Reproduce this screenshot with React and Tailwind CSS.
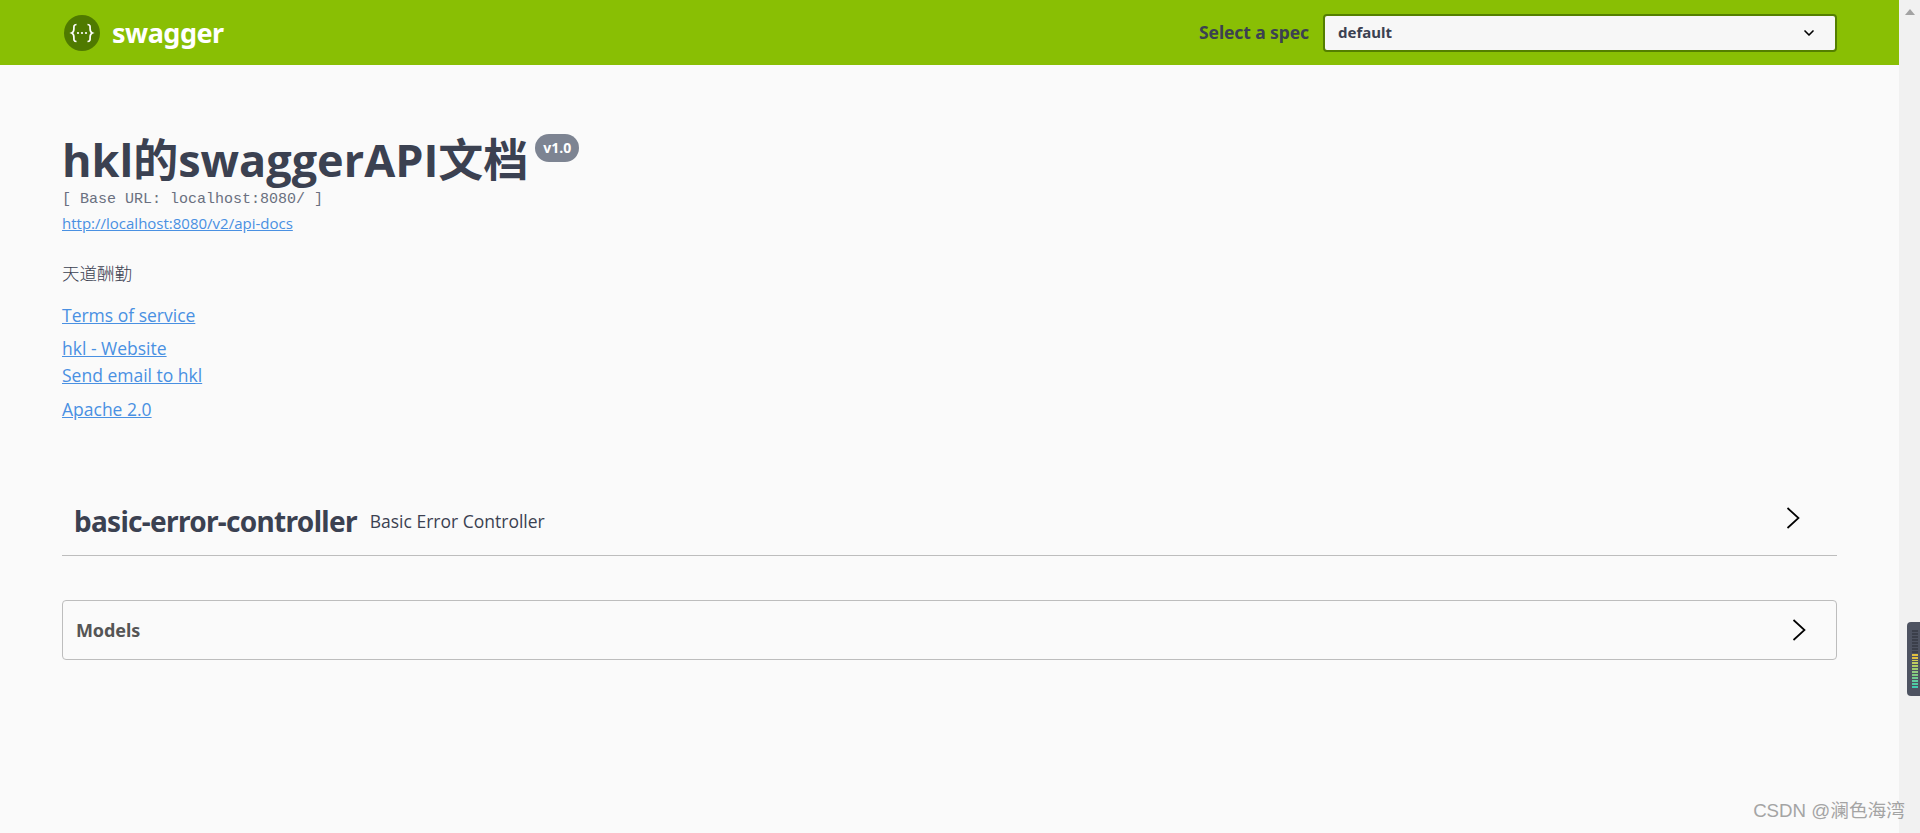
import { ChevronDown } from 'lucide-react';

const sans = 'font-["Open_Sans","Noto_Sans_CJK_SC",sans-serif]';
const head = 'font-["Noto_Sans","Noto_Sans_CJK_SC",sans-serif]';

function Logo() {
  return (
    <svg width="36" height="36" viewBox="0 0 36 36" className="shrink-0">
      <circle cx="18" cy="18" r="18" fill="#4f7a00" />
      <path
        d="M12.5 9.5c-3 0-2.6 2.2-2.6 4.2 0 2-.4 3.6-2.2 4.3 1.8.7 2.2 2.300 2.200 4.300 0 2-.4 4.200 2.600 4.200M23.500 9.500c3 0 2.600 2.200 2.600 4.200 0 2 .4 3.600 2.200 4.300-1.800.7-2.200 2.300-2.200 4.300 0 2 .4 4.200-2.600 4.200"
        fill="none"
        stroke="#fff"
        strokeWidth="1.700"
      />
      <circle cx="14" cy="18" r="1.100" fill="#fff" />
      <circle cx="18" cy="18" r="1.100" fill="#fff" />
      <circle cx="22" cy="18" r="1.100" fill="#fff" />
    </svg>
  );
}

function Chevron({ className = '' }) {
  return (
    <svg width="14" height="24" viewBox="0 0 14 24" className={`shrink-0 ${className}`}>
      <path d="M1.500 2l11 10-11 10" fill="none" stroke="#000" strokeWidth="1.700" />
    </svg>
  );
}

function TextLink({ children, className = '' }) {
  return (
    <a href="#" className={`block w-fit text-[#4990e2] underline ${className}`}>
      {children}
    </a>
  );
}

export default function App() {
  return (
    <div className={`relative flex h-[833px] overflow-hidden bg-[#fafafa] ${sans}`}>
      <main className="min-w-0 flex-1">
        <header className="flex h-[65px] items-center justify-between bg-[#89bf04] px-[62px]">
          <div className="flex items-center gap-[12px] pl-[2px]">
            <Logo />
            <span className={`text-[27px] leading-none font-bold tracking-[-0.5px] text-white ${head}`}>swagger</span>
          </div>
          <div className="flex items-center gap-[14px]">
            <span className={`text-[17.500px] font-bold tracking-[-0.1px] text-[#3b4151] ${head}`}>Select a spec</span>
            <div className={`flex h-[38px] w-[514px] items-center justify-between rounded border-2 border-[#547f00] bg-[#f7f7f7] pr-[18px] pl-[13px] text-[15px] font-bold text-[#3b4151] ${head}`}>
              <span>default</span>
              <ChevronDown size={16} strokeWidth={2.500} className="text-black" />
            </div>
          </div>
        </header>

        <div className="px-[62px]">
          <section className="pt-[65px] text-[#3b4151]">
            <div className="flex items-start">
              <h1 className="text-[45px] leading-[60px] font-bold">hkl的swaggerAPI文档</h1>
              <span className="mt-[4px] ml-[7px] rounded-full bg-[#7d8492] px-[8px] py-[4px] text-[14px] leading-[20px] font-bold text-white">v1.0</span>
            </div>
            <p className='mt-[1px] text-[15px] leading-[18px] text-[#6a7080] font-["Liberation_Mono",monospace]'>[ Base URL: localhost:8080/ ]</p>
            <TextLink className="mt-[4px] text-[15px] leading-[20px]">http://localhost:8080/v2/api-docs</TextLink>
            <p className="mt-[28px] text-[17.500px] leading-[24px] font-light">天道酬勤</p>
            <TextLink className="mt-[18px] text-[17.500px] leading-[24px]">Terms of service</TextLink>
            <TextLink className="mt-[9px] text-[17.500px] leading-[24px]">hkl - Website</TextLink>
            <TextLink className="mt-[3px] text-[17.500px] leading-[24px]">Send email to hkl</TextLink>
            <TextLink className="mt-[10px] text-[17.500px] leading-[24px]">Apache 2.0</TextLink>
          </section>

          <section className="mt-[66px] flex h-[69px] items-center border-b border-[#bdbdbd] pr-[37px] pl-[12px] text-[#3b4151]">
            <h2 className={`text-[28px] font-bold tracking-[-0.7px] ${head}`}>basic-error-controller</h2>
            <span className="ml-[13px] flex-1 text-[17.500px]">Basic Error Controller</span>
            <Chevron className="mb-[6px]" />
          </section>

          <section className="mt-[44px] flex h-[60px] items-center justify-between rounded border border-[#bdbdbd] pr-[30px] pl-[13px]">
            <h3 className={`text-[18px] font-bold tracking-[-0.1px] text-[#555555] ${head}`}>Models</h3>
            <Chevron />
          </section>
        </div>
      </main>

      <aside className="flex w-[21px] shrink-0 justify-center bg-[#f1f1f1] pt-[9px]">
        <div className="h-0 w-0 border-x-[5px] border-b-[6px] border-x-transparent border-b-[#a3a3a3]" />
      </aside>

      <div className="absolute top-[622px] right-0 flex h-[74px] w-[13px] flex-col gap-[1px] rounded-l-[4px] bg-[#4e5361] py-[8px] pr-[2px] pl-[5px]">
        {['#3b3f4a', '#3b3f4a', '#3b3f4a', '#3b3f4a', '#3b3f4a', '#3b3f4a', '#3b3f4a', '#3b3f4a', '#e0c040', '#e0c040', '#d0cc50', '#c0cc60', '#b0cc60', '#a0cc70', '#90cc80', '#80cc80', '#70cc90', '#60cca0', '#50cca0', '#40ccb0'].map((c, i) => (
          <div key={i} className="h-[2px] w-full" style={{ backgroundColor: c }} />
        ))}
      </div>

      <span className='absolute right-[15px] bottom-[8px] text-[18.700px] text-[#8f8f8f] opacity-80 font-["Liberation_Sans","Noto_Sans_CJK_SC",sans-serif]'>CSDN @澜色海湾</span>
    </div>
  );
}
